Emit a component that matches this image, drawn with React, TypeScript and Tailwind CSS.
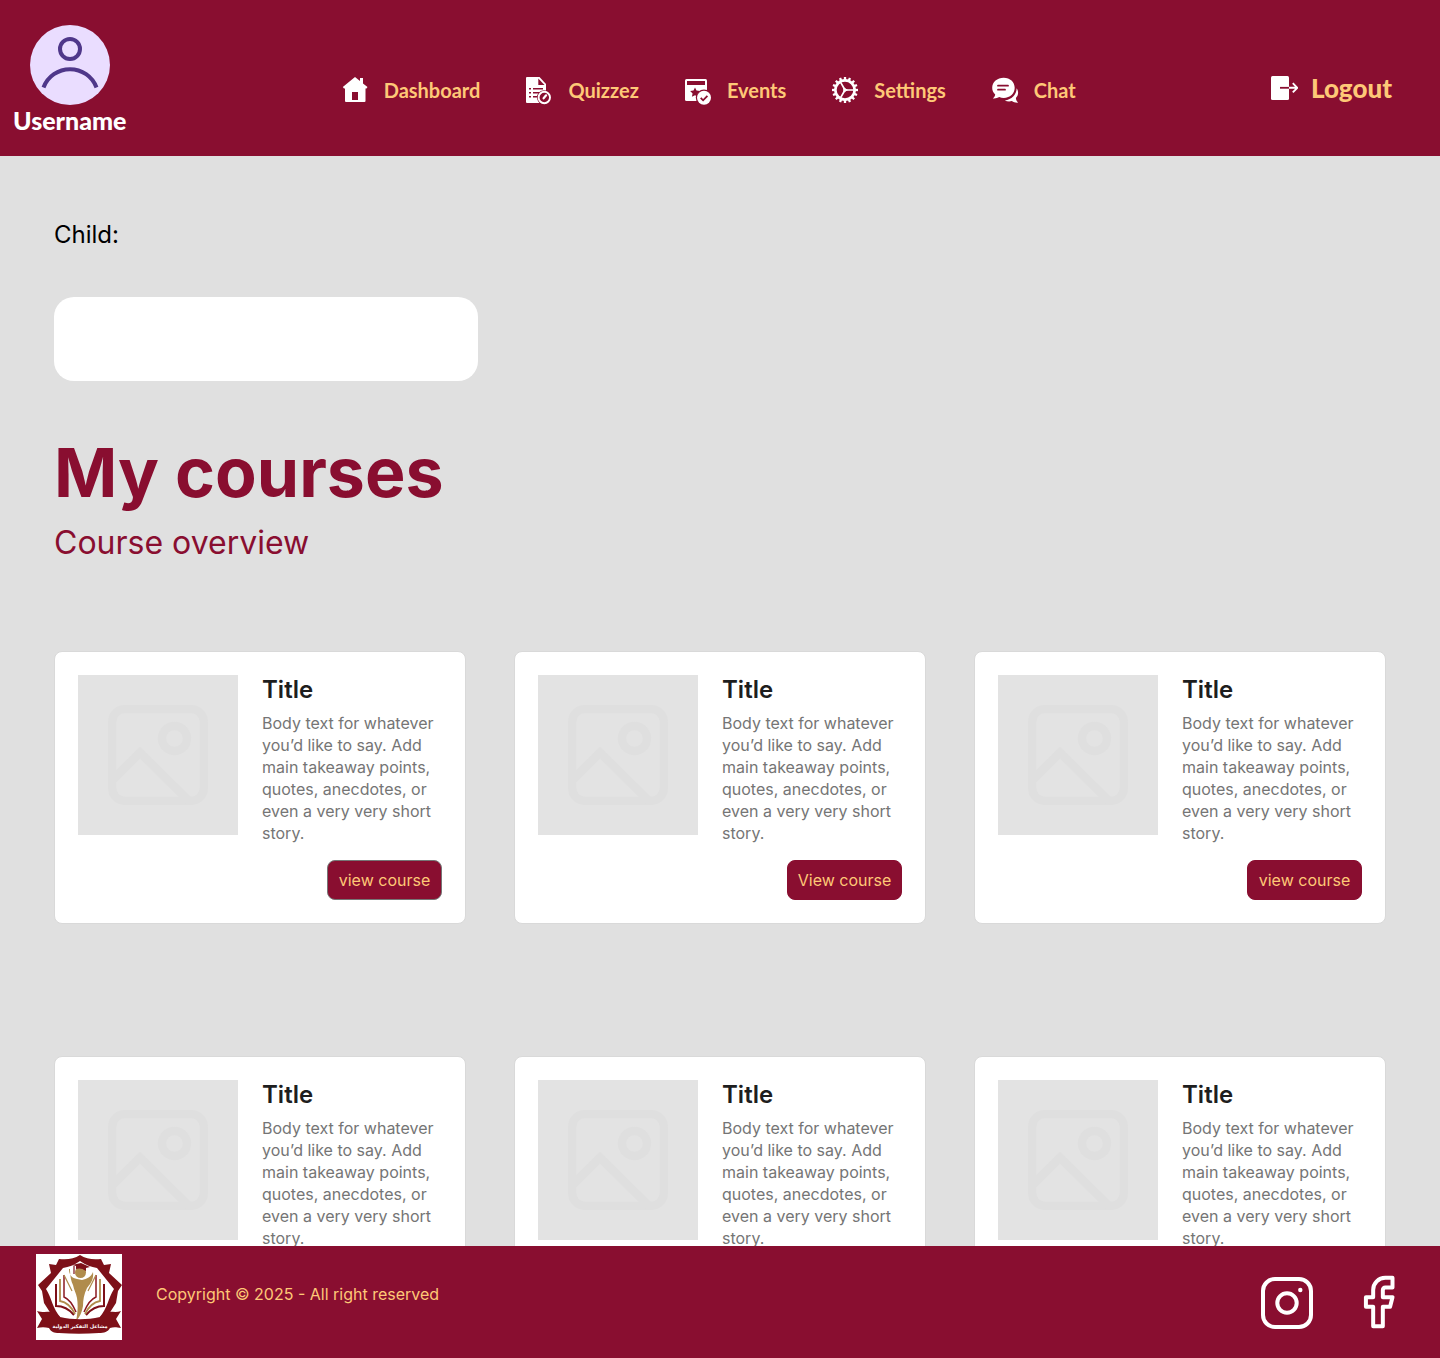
import type { ReactNode } from "react";

const gearTeeth = Array.from({ length: 16 }, (_, i) => i * 22.5);

function HomeIcon() {
  return (
    <svg viewBox="0 0 28 28" className="size-7 shrink-0" aria-hidden="true">
      <path
        fill="#fff"
        fillRule="evenodd"
        d="M14 1 19 5V2h3v5.500L26.500 11 25.500 12.500H24.500V25a1 1 0 0 1-1 1H5a1 1 0 0 1-1-1V12.500H3L1.800 11ZM11 16v8h6v-8Z"
      />
    </svg>
  );
}

function QuizIcon() {
  return (
    <svg viewBox="0 0 28 30" className="h-[30px] w-7 shrink-0" aria-hidden="true">
      <path fill="#fff" d="M2 2h12.500L21 9v19H2a1 1 0 0 1-1-1V3a1 1 0 0 1 1-1Z" />
      <path fill="#890e30" d="M13.300 3.600 19.500 10h-6.200Z" />
      <path stroke="#890e30" strokeWidth="1.500" d="M4 13.700h2M4 17.700h2M4 21.700h2M8 13.700h10M8 17.700h8M8 21.700h5" />
      <circle cx="19.300" cy="22.500" r="7.300" fill="#890e30" />
      <circle cx="19.300" cy="22.500" r="5.700" fill="none" stroke="#fff" strokeWidth="1.900" />
      <path d="m18.600 23.300 2.500-3" stroke="#fff" strokeWidth="2.200" strokeLinecap="round" />
    </svg>
  );
}

function EventsIcon() {
  return (
    <svg viewBox="0 0 28 28" className="size-7 shrink-0 overflow-visible" aria-hidden="true">
      <rect x="1" y="3" width="22" height="22" rx="1.500" fill="#fff" />
      <path fill="#890e30" d="M3 5h18v4H3Z" />
      <path
        fill="#890e30"
        d="m11 11.500 1.500 3.100 3.400.4-2.500 2.400.7 3.400L11 19.200l-3.100 1.600.7-3.400L6.100 15l3.400-.4Z"
      />
      <circle cx="20" cy="21.800" r="8.200" fill="#890e30" />
      <circle cx="20" cy="21.800" r="7" fill="#fff" />
      <path d="m16.700 21.900 2.400 2.400 4.300-4.400" fill="none" stroke="#890e30" strokeWidth="1.800" />
    </svg>
  );
}

function SettingsIcon() {
  return (
    <svg viewBox="0 0 28 28" className="size-7 shrink-0" aria-hidden="true">
      <g stroke="#fff" fill="none">
        <circle cx="14" cy="14" r="9.600" strokeWidth="2.600" />
        {gearTeeth.map((a) => (
          <path key={a} d="M14 1v3" strokeWidth="2.300" transform={`rotate(${a} 14 14)`} />
        ))}
        <path d="M14 14h9M14 14 9.500 6.200M14 14l-4.500 7.800" strokeWidth="1.700" />
        <path d="m12.800 11.900 3.600 2.100-3.600 2.100Z" fill="#fff" strokeWidth="1" />
      </g>
    </svg>
  );
}

function ChatIcon() {
  return (
    <svg viewBox="0 0 28 28" className="size-7 shrink-0" aria-hidden="true">
      <path
        fill="#fff"
        d="M12.700 1.800c6.400 0 11 4.300 11 10s-4.600 10.100-11 10.100c-1.700 0-3-.2-4.500-.8-1.600 1-3.600 1.500-6.400 1.300 1.600-1.200 2.300-2.300 2.400-3.900C2.200 16.700 1.200 14.500 1.200 11.800c0-5.700 5.100-10 11.500-10Z"
      />
      <path
        fill="#fff"
        d="M25.600 12.300c2.300 3.300 1.900 7-.7 9.800.1 2 .9 3.300 2.300 4.500-2.600.2-4.700-.4-6.300-1.500-2.400.8-5 .5-7.100-.7C20.500 23.600 25.600 19 25.600 12.300Z"
      />
      <path d="M7 9.700h10M7 13.700h7" stroke="#890e30" strokeWidth="1.800" strokeLinecap="round" />
    </svg>
  );
}

function LogoutIcon() {
  return (
    <svg viewBox="0 0 28 28" className="size-7 shrink-0" aria-hidden="true">
      <rect x="1" y="2" width="18" height="24" rx="1.500" fill="#fff" />
      <path d="M10 13.800h9" stroke="#890e30" strokeWidth="1.800" />
      <path d="M19 13.800h8M22.800 9.200l4.500 4.600-4.500 4.600" fill="none" stroke="#fff" strokeWidth="1.900" />
    </svg>
  );
}

function Avatar() {
  return (
    <svg viewBox="0 0 80 80" className="size-20" aria-hidden="true">
      <circle cx="40" cy="40" r="40" fill="#eaddff" />
      <g fill="none" stroke="#4f378a" strokeWidth="4">
        <circle cx="40" cy="24" r="10" />
        <path d="M13.500 62.500a28.300 28.300 0 0 1 53 0" />
      </g>
    </svg>
  );
}

function Placeholder() {
  return (
    <svg viewBox="0 0 160 160" className="size-40 shrink-0 bg-[#e3e3e3]" role="img" aria-label="Course image">
      <g fill="none" stroke="#dfdfdf" strokeWidth="8.300" transform="translate(30 30)">
        <rect x="4.200" y="4.200" width="91.600" height="91.600" rx="12.500" />
        <circle cx="66.500" cy="33.500" r="12.500" />
        <path d="M4.500 75 32 47.500 81 96" />
      </g>
    </svg>
  );
}

function SchoolLogo() {
  return (
    <svg viewBox="0 0 86 86" className="size-[86px] shrink-0 bg-white" role="img" aria-label="School logo">
      <path
        d="M44 1C38 5 31 6 23 5l-3 6-7-1 2 9L2 31l4 6 2 12 9 14h54l9-14 2-12 4-6-13-12 2-9-7 1-3-6c-8 1-15 0-21-4Z"
        fill="#7d1018"
      />
      <path d="M44 7C38 11 33 13 27 14L10 35c6 9 6 19 15 29h38c9-10 9-20 15-29L61 14c-6-1-11-3-17-7Z" fill="#fff" />
      <path d="M20 30v22c7 0 13 3 18 9M68 30v22c-7 0-13 3-18 9" fill="none" stroke="#7d1018" strokeWidth="2" />
      <path d="M24 25v22c6 1 11 5 15 13M64 25v22c-6 1-11 5-15 13" fill="none" stroke="#b08c4c" strokeWidth="1.800" />
      <path d="M28 21v22c5 2 9 8 12 15M60 21v22c-5 2-9 8-12 15" fill="none" stroke="#8a1820" strokeWidth="1.500" />
      <path d="m28 21 8 16M60 21l-8 16" fill="none" stroke="#b08c4c" strokeWidth="1.200" />
      <path
        d="M33 15c0 6 3 9 8 10l5 1c5-1 9-3 11-8 1 8-3 12-6 16-3 6-4 12-4 18-1 6-3 11-7 15 2-9 2-17 1-23-1-5-3-8-4-13-2-4-3-9-3-16Z"
        fill="#b08c4c"
      />
      <circle cx="44.500" cy="18.500" r="5.500" fill="#b08c4c" />
      <path d="m36 11 9-2 9 4-4 1v3c-4-3-7-3-10-2v-3Z" fill="#7d1018" />
      <path d="M38 12v8" stroke="#7d1018" strokeWidth="1.200" />
      <path
        d="M1 57c7 2 12 0 18 1 2 1 3 4 5 5 13 3 27 3 40 0 2-1 3-4 5-5 6-1 11 1 16-1l-5 8 5 9c-5-1-8-1-11 0-2 4-6 5-11 5-13 1-27 1-40 0-5 0-8-1-10-5-4-1-8-1-12 0l5-9-5-8Z"
        fill="#7d1018"
      />
      <text
        x="44"
        y="74"
        textAnchor="middle"
        fill="#fff"
        className="font-['DejaVu_Sans',sans-serif] text-[5px] font-bold"
      >
        مشاعل التفكير الدولية
      </text>
    </svg>
  );
}

function InstagramIcon() {
  return (
    <svg viewBox="0 0 58 58" className="size-[58px]" fill="none" stroke="#fff" strokeWidth="4" aria-hidden="true">
      <rect x="5" y="6" width="48" height="48" rx="12" />
      <circle cx="29" cy="30" r="9.700" />
      <circle cx="42.300" cy="17" r="2.200" fill="#fff" stroke="none" />
    </svg>
  );
}

function FacebookIcon() {
  return (
    <svg
      viewBox="0 0 24 24"
      className="size-[58px]"
      fill="none"
      stroke="#fff"
      strokeWidth="1.650"
      strokeLinejoin="round"
      aria-hidden="true"
    >
      <path d="M18 2h-3a5 5 0 0 0-5 5v3H7v4h3v8h4v-8h3l1-4h-4V7a1 1 0 0 1 1-1h3z" />
    </svg>
  );
}

function NavLink({ icon, label }: { icon: ReactNode; label: string }) {
  return (
    <a href="#" className="flex items-center gap-[15px] text-[20px] leading-6 font-bold text-[#fec877]">
      {icon}
      {label}
    </a>
  );
}

type CourseProps = { action: string; outlined?: boolean };

function CourseCard({ action, outlined }: CourseProps) {
  return (
    <article className="flex items-start gap-6 rounded-lg border border-[#d9d9d9] bg-white p-[23px]">
      <Placeholder />
      <div className="flex min-w-0 flex-1 flex-col">
        <h3 className="text-[24px] leading-[29px] font-semibold text-[#1e1e1e]">Title</h3>
        <p className="mt-2 text-[16px] leading-[22px] text-[#757575]">
          Body text for whatever you’d like to say. Add main takeaway points, quotes, anecdotes, or even a very very
          short story.
        </p>
        <button
          type="button"
          className={`mt-4 h-10 w-[115px] self-end rounded-lg border bg-[#890e30] text-[16px] leading-4 whitespace-nowrap text-[#fec877] ${
            outlined ? "border-[#767676]" : "border-[#890e30]"
          }`}
        >
          {action}
        </button>
      </div>
    </article>
  );
}

const courses: CourseProps[] = [
  { action: "view course", outlined: true },
  { action: "View course" },
  { action: "view course" },
  { action: "view course" },
  { action: "view course" },
  { action: "view course" },
];

export default function App() {
  return (
    <div className="flex h-screen flex-col bg-[#e0e0e0] font-['Inter',sans-serif]">
      <header className="flex h-[156px] shrink-0 items-start justify-between bg-[#890e30] pr-12 pl-[13px] font-['Lato',sans-serif]">
        <div className="flex flex-col items-center pt-[25px]">
          <Avatar />
          <span className="text-[25px] leading-[30px] font-black text-white">Username</span>
        </div>
        <nav className="flex items-center gap-[45px] pt-[75px] pl-5">
          <NavLink icon={<HomeIcon />} label="Dashboard" />
          <NavLink icon={<QuizIcon />} label="Quizzez" />
          <NavLink icon={<EventsIcon />} label="Events" />
          <NavLink icon={<SettingsIcon />} label="Settings" />
          <NavLink icon={<ChatIcon />} label="Chat" />
        </nav>
        <button type="button" className="mt-[74px] flex items-center gap-[13px] text-[26px] leading-7 font-black text-[#fec877]">
          <LogoutIcon />
          Logout
        </button>
      </header>

      <main className="min-h-0 flex-1 overflow-y-auto px-[54px] pt-16 pb-16 [scrollbar-width:none]">
        <label htmlFor="child" className="block text-[24px] leading-[29px] text-black">
          Child:
        </label>
        <input id="child" type="text" className="mt-12 block h-[84px] w-[424px] rounded-[20px] bg-white px-6 text-[24px] outline-none" />
        <h1 className="mt-12 text-[68px] leading-[86px] font-bold text-[#890e30]">My courses</h1>
        <h2 className="mt-2 text-[32px] leading-10 text-[#890e30]">Course overview</h2>
        <section className="mt-[88px] grid grid-cols-3 gap-x-12 gap-y-[132px]">
          {courses.map((course, i) => (
            <CourseCard key={i} {...course} />
          ))}
        </section>
      </main>

      <footer className="flex h-28 shrink-0 items-center justify-between bg-[#890e30] pr-[33px] pl-9">
        <div className="flex items-start gap-[34px] self-start pt-2">
          <SchoolLogo />
          <p className="pt-7 text-[16px] leading-6 text-[#fec877]">Copyright © 2025 - All right reserved</p>
        </div>
        <div className="flex items-center gap-[33px]">
          <a href="#" aria-label="Instagram">
            <InstagramIcon />
          </a>
          <a href="#" aria-label="Facebook">
            <FacebookIcon />
          </a>
        </div>
      </footer>
    </div>
  );
}
